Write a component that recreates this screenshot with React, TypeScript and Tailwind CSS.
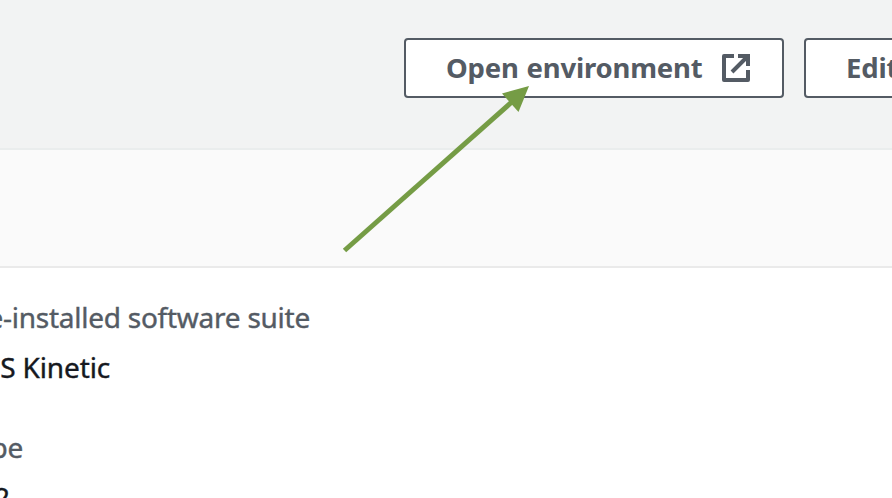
const button =
  "flex h-[60px] shrink-0 items-center rounded border-2 border-[#545b64] bg-white pl-10 font-bold text-[27.5px] leading-[40px] tracking-[-0.2px] text-[#545b64] whitespace-nowrap";

function Field({ label, value, labelClass, valueClass }: { label: string; value: string; labelClass: string; valueClass: string }) {
  return (
    <div className="flex flex-col gap-[10px] text-[28px] leading-[40px] whitespace-nowrap [-webkit-text-stroke:0.4px_currentColor]">
      <div className={`flex justify-end tracking-[-0.25px] text-[#545b64] ${labelClass}`}>
        <span className="shrink-0">{label}</span>
      </div>
      <div className={`flex justify-end tracking-[-0.15px] text-[#16191f] ${valueClass}`}>
        <span className="shrink-0">{value}</span>
      </div>
    </div>
  );
}

export default function App() {
  return (
    <div className="relative flex h-[498px] w-[892px] flex-col overflow-hidden bg-white font-['Noto_Sans',sans-serif]">
      <header className="flex h-[150px] shrink-0 gap-5 border-b-2 border-[#eaeded] bg-[#f2f3f3] pt-[38px] pl-[404px]">
        <button className={`${button} w-[380px]`}>
          <span className="w-[276px] text-left [word-spacing:1px]">Open environment</span>
          <svg width="28" height="28" viewBox="0 0 28 28" fill="none" stroke="currentColor" strokeWidth="4">
            <path d="M12 2H2V26H26V16" strokeLinejoin="round" />
            <path d="M16 2H26V12M26 2L10 18" />
          </svg>
        </button>
        <button className={`${button} w-[160px]`}>Edit</button>
      </header>
      <div className="h-[118px] shrink-0 border-b-2 border-[#eaeaea] bg-[#fafafa]" />
      <main className="flex flex-col gap-[40px] pt-[29px]">
        <Field label="Pre-installed software suite" value="ROS Kinetic" labelClass="w-[310px]" valueClass="w-[110px]" />
        <Field label="Instance type" value="EC2" labelClass="w-[23px]" valueClass="w-[10px]" />
      </main>
      <svg className="pointer-events-none absolute inset-0" width="892" height="498" viewBox="0 0 892 498">
        <path d="M344.5 250.5L514 100" stroke="#759c45" strokeWidth="5" />
        <path d="M529 86L502 93.500L518.500 112Z" fill="#759c45" />
      </svg>
    </div>
  );
}
